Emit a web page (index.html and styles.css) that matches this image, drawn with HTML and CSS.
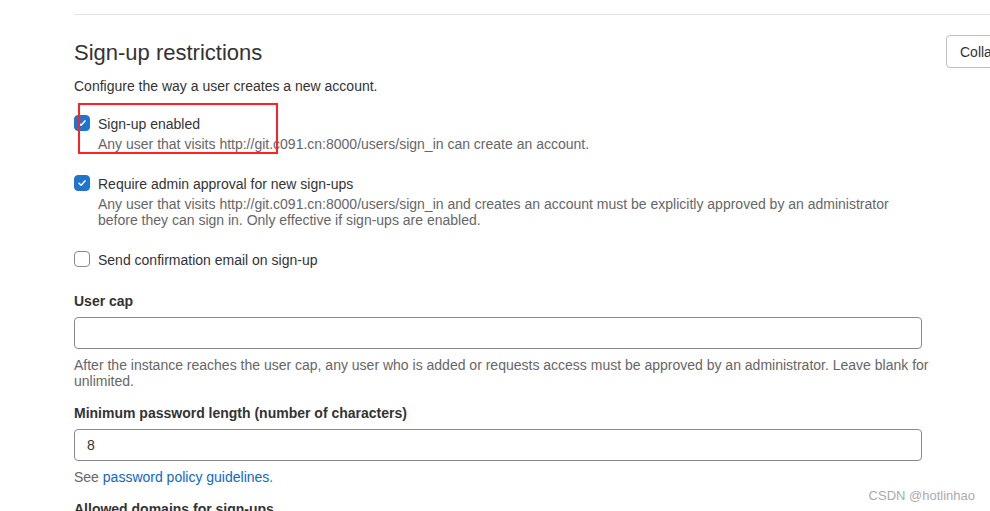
FILE: index.html
```html
<!DOCTYPE html>
<html>
<head>
<meta charset="utf-8">
<link rel="stylesheet" href="styles.css">
</head>
<body>
<div class="page">
  <div class="section">
    <div class="header">
      <div class="header-text">
        <h2 class="title">Sign-up restrictions</h2>
        <p class="desc">Configure the way a user creates a new account.</p>
      </div>
      <button class="collapse">Collapse</button>
    </div>

    <div class="check-row first">
      <span class="cb checked"><svg viewBox="0 0 16 16" width="12" height="12"><path d="M4 8.4 L6.8 11 L12 5.2" fill="none" stroke="#fff" stroke-width="2" stroke-linecap="round" stroke-linejoin="round"/></svg></span>
      <div class="check-text">
        <div class="check-label">Sign-up enabled</div>
        <div class="help">Any user that visits http://git.c091.cn:8000/users/sign_in can create an account.</div>
      </div>
      <div class="redbox"></div>
    </div>

    <div class="check-row">
      <span class="cb checked"><svg viewBox="0 0 16 16" width="12" height="12"><path d="M4 8.4 L6.8 11 L12 5.2" fill="none" stroke="#fff" stroke-width="2" stroke-linecap="round" stroke-linejoin="round"/></svg></span>
      <div class="check-text">
        <div class="check-label">Require admin approval for new sign-ups</div>
        <div class="help">Any user that visits http://git.c091.cn:8000/users/sign_in and creates an account must be explicitly approved by an administrator before they can sign in. Only effective if sign-ups are enabled.</div>
      </div>
    </div>

    <div class="check-row">
      <span class="cb"></span>
      <div class="check-text">
        <div class="check-label">Send confirmation email on sign-up</div>
      </div>
    </div>

    <div class="field first-field">
      <label class="field-label">User cap</label>
      <div class="input"></div>
      <div class="help wide">After the instance reaches the user cap, any user who is added or requests access must be approved by an administrator. Leave blank for unlimited.</div>
    </div>

    <div class="field">
      <label class="field-label">Minimum password length (number of characters)</label>
      <div class="input">8</div>
      <div class="help">See <a class="link">password policy guidelines</a>.</div>
    </div>

    <div class="field">
      <label class="field-label">Allowed domains for sign-ups</label>
    </div>
  </div>
  <div class="watermark">CSDN @hotlinhao</div>
</div>
</body>
</html>
```
FILE: styles.css
```css
* { box-sizing: border-box; }
html, body { margin: 0; padding: 0; background: #fff; }
body {
  font-family: "Segoe UI", "Liberation Sans", Arial, sans-serif;
  color: #303030;
  font-size: 14px;
  overflow: hidden;
  height: 511px;
}
.page { position: relative; height: 511px; padding: 14px 0 0 74px; overflow: hidden; }
.section {
  border-top: 1px solid #e3e3e3;
  padding-top: 22px;
}
.header { display: flex; justify-content: space-between; align-items: flex-start; }
.title {
  margin: 0;
  font-size: 22px;
  font-weight: 400;
  line-height: 32px;
  color: #333;
}
.desc { margin: 9px 0 0; line-height: 16px; color: #333; }
.collapse {
  margin-top: -2px;
  margin-right: -60px;
  width: 104px;
  height: 33px;
  border: 1px solid #bfbfbf;
  border-radius: 4px;
  background: #fff;
  font: inherit;
  color: #333;
  text-align: left;
  padding-left: 13px;
}
.check-row { position: relative; display: flex; gap: 8px; margin-top: 22px; }
.check-row.first { margin-top: 20px; }
.cb {
  flex: none;
  width: 16px; height: 16px;
  margin-top: 1px;
  border: 1px solid #89888d;
  border-radius: 4px;
  background: #fff;
  display: flex; align-items: center; justify-content: center;
}
.cb.checked { background: #1f75cb; border-color: #1f75cb; }
.check-text { line-height: 20px; }
.check-label { color: #333; }
.help { color: #666; line-height: 16px; font-size: 14px; max-width: 830px; }
.check-text .help { margin-top: 2px; }
.help.wide { max-width: none; width: 870px; }
.redbox {
  position: absolute;
  left: 4px; top: -11px;
  width: 200px; height: 51px;
  border: 2px solid #f22;
}
.field { margin-top: 14px; width: 848px; }
.field.first-field { margin-top: 21px; }
.field-label { display: block; font-weight: 600; line-height: 20px; margin-bottom: 6px; color: #333; }
.input {
  height: 32px;
  border: 1px solid #89888d;
  border-radius: 4px;
  padding: 0 12px;
  line-height: 30px;
  color: #333;
}
.field .help { margin-top: 8px; }
.link { color: #1068bf; text-decoration: none; }
.watermark {
  position: absolute;
  right: 15px; bottom: 8px;
  color: #aaa;
  font-size: 13px;
  font-family: "Liberation Sans", Arial, sans-serif;
}
```
